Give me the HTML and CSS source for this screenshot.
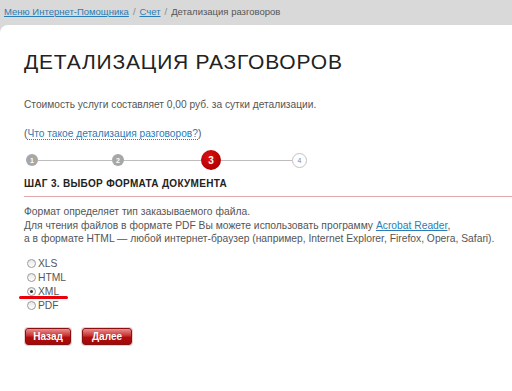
FILE: index.html
```html
<!DOCTYPE html>
<html lang="ru">
<head>
<meta charset="utf-8">
<link rel="stylesheet" href="styles.css">
</head>
<body>
<div class="crumbs"><a href="#">Меню Интернет-Помощника</a><span class="sep">/</span><a href="#">Счет</a><span class="sep">/</span><span class="cur">Детализация разговоров</span></div>
<div class="card">
  <h1 class="title">ДЕТАЛИЗАЦИЯ РАЗГОВОРОВ</h1>
  <p class="cost">Стоимость услуги составляет 0,00 руб. за сутки детализации.</p>
  <p class="what">(<a href="#" class="dotted">Что такое детализация разговоров?</a>)</p>
  <div class="steps">
    <span class="dot done">1</span><span class="line l1"></span>
    <span class="dot done">2</span><span class="line l2"></span>
    <span class="dot active">3</span><span class="line l3"></span>
    <span class="dot todo">4</span>
  </div>
  <h2 class="step-title">ШАГ 3. ВЫБОР ФОРМАТА ДОКУМЕНТА</h2>
  <p class="info">Формат определяет тип заказываемого файла.<br>Для чтения файлов в формате PDF Вы можете использовать программу <a href="#">Acrobat Reader</a>,<br>а в формате HTML — любой интернет-браузер (например, Internet Explorer, Firefox, Opera, Safari).</p>
  <ul class="formats">
    <li><span class="radio"></span>XLS</li>
    <li><span class="radio"></span>HTML</li>
    <li class="sel"><span class="radio on"></span>XML<span class="mark"></span></li>
    <li><span class="radio"></span>PDF</li>
  </ul>
  <div class="buttons">
    <button class="btn b-back">Назад</button>
    <button class="btn b-next">Далее</button>
  </div>
</div>
</body>
</html>
```
FILE: styles.css
```css
html, body { margin: 0; padding: 0; }
body {
  background: #d9d9d9;
  font-family: "Liberation Sans", Arial, sans-serif;
  color: #555;
  width: 512px;
  height: 391px;
  overflow: hidden;
}
a { color: #2a7db5; }
.crumbs {
  height: 25px;
  box-sizing: border-box;
  padding: 6px 0 0 4px;
  font-size: 9.5px;
  line-height: 12px;
  color: #555;
}
.crumbs a { color: #2a7db5; }
.crumbs .sep { color: #888; margin: 0 4px; }
.card {
  background: #fff;
  border-top-left-radius: 8px;
  height: 366px;
  padding-left: 24px;
}
.title {
  margin: 0;
  padding-top: 24px;
  font-size: 21px;
  line-height: 25px;
  font-weight: normal;
  color: #222;
  letter-spacing: 0.8px;
}
.cost {
  margin: 24px 0 0;
  font-size: 10.2px;
  line-height: 14px;
}
.what {
  margin: 15px 0 0;
  font-size: 10.2px;
  line-height: 14px;
}
.dotted { text-decoration: none; border-bottom: 1px dotted #2a7db5; }
.steps {
  display: flex;
  align-items: center;
  margin-top: 9px;
  height: 20px;
  padding-left: 2px;
}
.dot {
  display: flex;
  align-items: center;
  justify-content: center;
  border-radius: 50%;
  font-weight: bold;
  box-sizing: border-box;
  flex: none;
}
.dot.done {
  width: 12px; height: 12px;
  background: #a7a7a7;
  color: #fff;
  font-size: 7px;
}
.dot.active {
  width: 20px; height: 20px;
  background: radial-gradient(circle at 40% 35%, #e01010, #b00000 70%, #8a0000);
  color: #fff;
  font-size: 10px;
}
.dot.todo {
  width: 15px; height: 15px;
  background: #fff;
  border: 1px solid #c2c2c2;
  color: #888;
  font-size: 7px;
  font-weight: normal;
}
.line { height: 1px; background: #bdbdbd; flex: none; }
.l1 { width: 74px; }
.l2 { width: 77px; }
.l3 { width: 71px; }
.step-title {
  margin: 8px 0 0;
  font-size: 10px;
  line-height: 12px;
  color: #222;
  letter-spacing: 0.3px;
  padding-bottom: 6px;
  border-bottom: 1px solid #dfa9a9;
}
.info {
  margin: 8px 0 0;
  font-size: 10.3px;
  line-height: 13.5px;
}
.formats {
  list-style: none;
  margin: 11px 0 0;
  padding: 0 0 0 3px;
  font-size: 10.3px;
  line-height: 14px;
}
.formats li { display: flex; align-items: center; position: relative; width: max-content; }
.radio {
  width: 9px; height: 9px;
  border-radius: 50%;
  border: 1px solid #9a9a9a;
  background: linear-gradient(#e8e8e8, #fff);
  margin-right: 2px;
  box-sizing: border-box;
  position: relative;
}
.radio.on::after {
  content: "";
  position: absolute;
  left: 2px; top: 2px;
  width: 3px; height: 3px;
  border-radius: 50%;
  background: #333;
}
.mark {
  position: absolute;
  left: -8px; top: 11px;
  width: 49px; height: 3px;
  background: #e8000b;
  border-radius: 2px;
}
.buttons { display: flex; gap: 11px; margin-top: 15px; padding-left: 1px; }
.btn {
  height: 17px;
  padding: 0;
  border: 1px solid #8a1010;
  border-radius: 3px;
  background: linear-gradient(#e89090 0%, #c83030 45%, #b00e0e 55%, #a00a0a 100%);
  color: #fff;
  font-family: "Liberation Sans", Arial, sans-serif;
  font-weight: bold;
  font-size: 10px;
  line-height: 15px;
  box-shadow: 0 0 0 1px #ecd0d0;
}
.b-back { width: 46px; }
.b-next { width: 50px; }
```
